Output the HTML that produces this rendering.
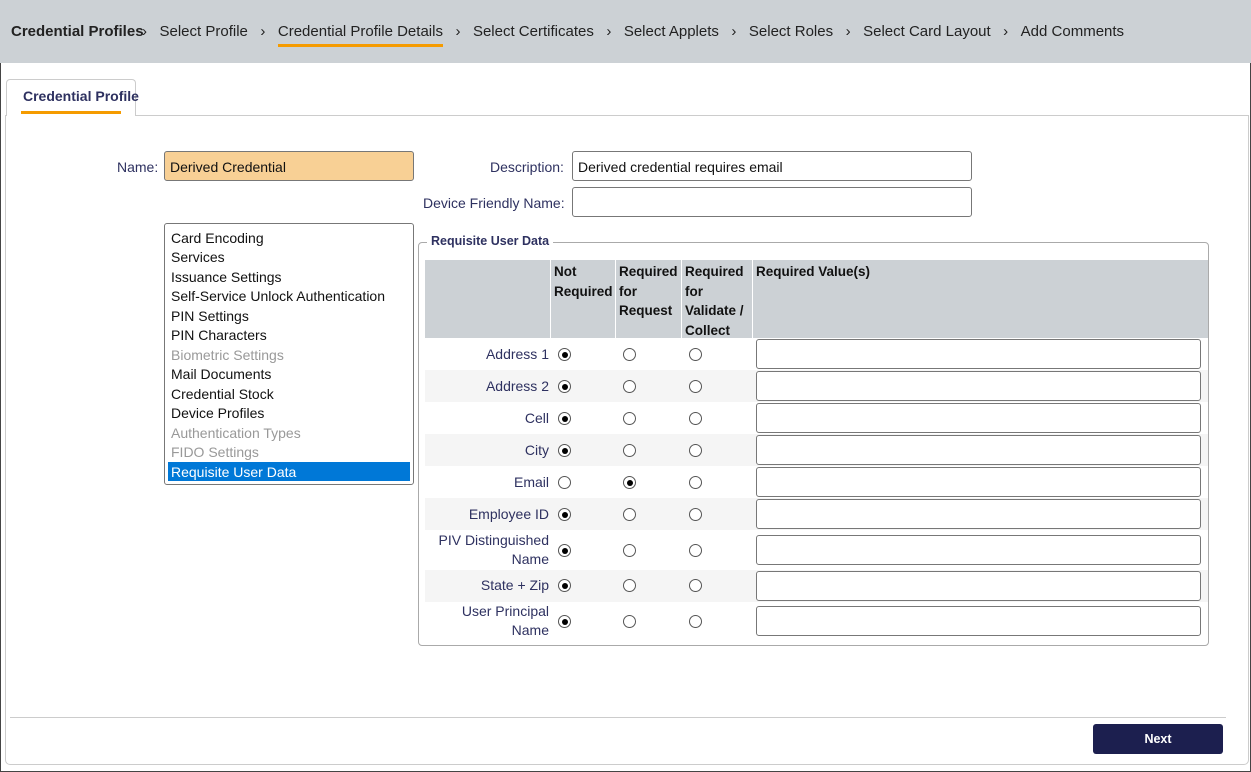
<!DOCTYPE html>
<html><head><meta charset="utf-8"><style>
*{box-sizing:border-box;margin:0;padding:0}
body{width:1251px;height:772px;position:relative;background:#fff;font-family:"Liberation Sans",sans-serif;font-size:14px;color:#111;overflow:hidden}
.a{position:absolute;white-space:nowrap}
.hdr{left:0;top:0;width:1251px;height:63px;background:#ccd1d5}
.bc{top:23px;font-size:15px;color:#222}
.lbl{color:#2e3160}
.inp{position:absolute;border:1px solid #777;border-radius:3px;background:#fff;height:30px}
.li{position:absolute;left:171px;font-size:14px}
.rad{position:absolute;width:13px;height:13px;border:1px solid #555;border-radius:50%;background:#fff}
.rad.on::after{content:"";position:absolute;left:2.5px;top:2.5px;width:6px;height:6px;border-radius:50%;background:#000}
.th{position:absolute;top:260px;height:78px;background:#ccd1d5;font-weight:bold;font-size:13.5px;line-height:19.5px;padding:2px 3px;color:#111}
.rl{position:absolute;width:122px;left:427px;text-align:right;color:#2e3160;line-height:19px}
</style></head><body>
<div style="position:absolute;left:0;top:0;width:1251px;height:772px;border:1px solid #444"></div>
<div class="a hdr"></div>
<div class="a bc" style="left:11px;font-weight:bold">Credential Profiles</div>
<div class="a bc" style="left:142px">›&nbsp;&nbsp;&nbsp;Select Profile&nbsp;&nbsp;&nbsp;›&nbsp;&nbsp;&nbsp;<span style="position:relative">Credential Profile Details<span style="position:absolute;left:0;right:0;top:21px;height:3px;background:#f59b00"></span></span>&nbsp;&nbsp;&nbsp;›&nbsp;&nbsp;&nbsp;Select Certificates&nbsp;&nbsp;&nbsp;›&nbsp;&nbsp;&nbsp;Select Applets&nbsp;&nbsp;&nbsp;›&nbsp;&nbsp;&nbsp;Select Roles&nbsp;&nbsp;&nbsp;›&nbsp;&nbsp;&nbsp;Select Card Layout&nbsp;&nbsp;&nbsp;›&nbsp;&nbsp;&nbsp;Add Comments</div>
<!-- panel -->
<div class="a" style="left:5px;top:115px;width:1244px;height:650px;border:1px solid #ccc;border-top:none;border-radius:0 0 5px 5px"></div>
<div class="a" style="left:135px;top:115px;width:1114px;height:1px;background:#ccc"></div>
<div class="a" style="left:6px;top:79px;width:130px;height:37px;border:1px solid #ccc;border-bottom:none;border-radius:4px 4px 0 0;background:#fff"></div>
<div class="a" style="left:23px;top:88px;font-weight:bold;color:#2e3160;font-size:14px">Credential Profile</div>
<div class="a" style="left:21px;top:111px;width:100px;height:3px;background:#f59b00"></div>
<!-- name -->
<div class="a lbl" style="left:117px;top:159px">Name:</div>
<div class="inp" style="left:164px;top:151px;width:250px;background:#f8d095"></div>
<div class="a" style="left:170px;top:159px">Derived Credential</div>
<div class="a lbl" style="left:490px;top:159px">Description:</div>
<div class="inp" style="left:572px;top:151px;width:400px"></div>
<div class="a" style="left:578px;top:159px">Derived credential requires email</div>
<div class="a lbl" style="left:423px;top:195px">Device Friendly Name:</div>
<div class="inp" style="left:572px;top:187px;width:400px"></div>
<!-- list -->
<div class="a" style="left:164px;top:223px;width:250px;height:262px;border:1px solid #777;border-radius:3px"></div>
<div class="a" style="left:168px;top:462px;width:242px;height:19px;background:#0078d7"></div>
<div class="li" style="top:230px">Card Encoding</div>
<div class="li" style="top:249px">Services</div>
<div class="li" style="top:269px">Issuance Settings</div>
<div class="li" style="top:288px">Self-Service Unlock Authentication</div>
<div class="li" style="top:308px">PIN Settings</div>
<div class="li" style="top:327px">PIN Characters</div>
<div class="li" style="top:347px;color:#999">Biometric Settings</div>
<div class="li" style="top:366px">Mail Documents</div>
<div class="li" style="top:386px">Credential Stock</div>
<div class="li" style="top:405px">Device Profiles</div>
<div class="li" style="top:425px;color:#999">Authentication Types</div>
<div class="li" style="top:444px;color:#999">FIDO Settings</div>
<div class="li" style="top:464px;color:#fff">Requisite User Data</div>
<!-- fieldset -->
<div class="a" style="left:418px;top:242px;width:791px;height:404px;border:1px solid #aaa;border-radius:4px"></div>
<div class="a" style="left:427px;top:234px;background:#fff;padding:0 4px;font-weight:bold;font-size:12.5px;color:#2e3160">Requisite User Data</div>
<div class="th" style="left:425px;width:125px"></div>
<div class="th" style="left:551px;width:64px">Not<br>Required</div>
<div class="th" style="left:616px;width:65px">Required<br>for<br>Request</div>
<div class="th" style="left:682px;width:70px">Required<br>for<br>Validate /<br>Collect</div>
<div class="th" style="left:753px;width:455px">Required Value(s)</div>
<!-- rows -->
<div class="a" style="left:425px;top:370px;width:783px;height:32px;background:#f5f5f5"></div>
<div class="a" style="left:425px;top:434px;width:783px;height:32px;background:#f5f5f5"></div>
<div class="a" style="left:425px;top:498px;width:783px;height:32px;background:#f5f5f5"></div>
<div class="a" style="left:425px;top:570px;width:783px;height:32px;background:#f5f5f5"></div>

<div class="rl" style="top:345px">Address 1</div>
<div class="rl" style="top:377px">Address 2</div>
<div class="rl" style="top:409px">Cell</div>
<div class="rl" style="top:441px">City</div>
<div class="rl" style="top:473px">Email</div>
<div class="rl" style="top:505px">Employee ID</div>
<div class="rl" style="top:531px">PIV Distinguished<br>Name</div>
<div class="rl" style="top:576px">State + Zip</div>
<div class="rl" style="top:602px">User Principal<br>Name</div>

<div class="rad on" style="left:558px;top:348px"></div><div class="rad" style="left:623px;top:348px"></div><div class="rad" style="left:689px;top:348px"></div>
<div class="rad on" style="left:558px;top:380px"></div><div class="rad" style="left:623px;top:380px"></div><div class="rad" style="left:689px;top:380px"></div>
<div class="rad on" style="left:558px;top:412px"></div><div class="rad" style="left:623px;top:412px"></div><div class="rad" style="left:689px;top:412px"></div>
<div class="rad on" style="left:558px;top:444px"></div><div class="rad" style="left:623px;top:444px"></div><div class="rad" style="left:689px;top:444px"></div>
<div class="rad" style="left:558px;top:476px"></div><div class="rad on" style="left:623px;top:476px"></div><div class="rad" style="left:689px;top:476px"></div>
<div class="rad on" style="left:558px;top:508px"></div><div class="rad" style="left:623px;top:508px"></div><div class="rad" style="left:689px;top:508px"></div>
<div class="rad on" style="left:558px;top:544px"></div><div class="rad" style="left:623px;top:544px"></div><div class="rad" style="left:689px;top:544px"></div>
<div class="rad on" style="left:558px;top:579px"></div><div class="rad" style="left:623px;top:579px"></div><div class="rad" style="left:689px;top:579px"></div>
<div class="rad on" style="left:558px;top:615px"></div><div class="rad" style="left:623px;top:615px"></div><div class="rad" style="left:689px;top:615px"></div>

<div class="inp" style="left:756px;top:339px;width:445px"></div>
<div class="inp" style="left:756px;top:371px;width:445px"></div>
<div class="inp" style="left:756px;top:403px;width:445px"></div>
<div class="inp" style="left:756px;top:435px;width:445px"></div>
<div class="inp" style="left:756px;top:467px;width:445px"></div>
<div class="inp" style="left:756px;top:499px;width:445px"></div>
<div class="inp" style="left:756px;top:535px;width:445px"></div>
<div class="inp" style="left:756px;top:571px;width:445px"></div>
<div class="inp" style="left:756px;top:606px;width:445px"></div>
<!-- footer -->
<div class="a" style="left:10px;top:717px;width:1216px;height:1px;background:#ccc"></div>
<div class="a" style="left:1093px;top:724px;width:130px;height:30px;background:#1c1f4f;border-radius:3px;color:#fff;font-weight:bold;font-size:12.5px;text-align:center;line-height:30px">Next</div>
</body></html>
